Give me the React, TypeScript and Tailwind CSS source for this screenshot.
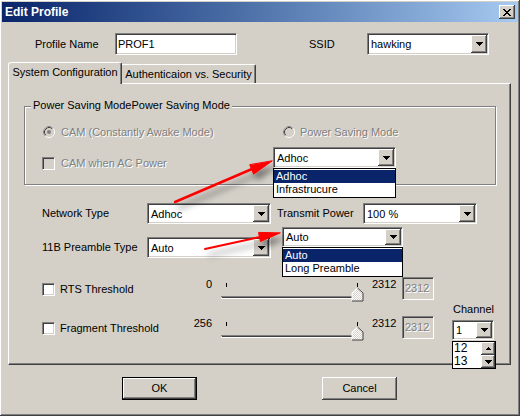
import React from 'react'

// classic 3D edges
const RAISED =
  'shadow-[inset_-1px_-1px_0_#404040,inset_1px_1px_0_#ffffff,inset_-2px_-2px_0_#808080,inset_2px_2px_0_#d4d0c8]'
const SUNKEN =
  'border border-t-[#808080] border-l-[#808080] border-r-white border-b-white shadow-[inset_1px_1px_0_#404040,inset_-1px_-1px_0_#d4d0c8]'
const DISABLED = 'text-[#808080] [text-shadow:1px_1px_0_#ffffff]'

function DownGlyph() {
  return (
    <svg width="7" height="4" viewBox="0 0 7 4" shapeRendering="crispEdges">
      <path d="M0 0h7v1H0zM1 1h5v1H1zM2 2h3v1H2zM3 3h1v1H3z" fill="#000" />
    </svg>
  )
}

function UpGlyph() {
  return (
    <svg width="5" height="3" viewBox="0 0 5 3" shapeRendering="crispEdges">
      <path d="M2 0h1v1H2zM1 1h3v1H1zM0 2h5v1H0z" fill="#000" />
    </svg>
  )
}

function DropButton() {
  return (
    <div className={`flex w-[16px] shrink-0 items-center justify-center bg-[#d4d0c8] ${RAISED}`}>
      <DownGlyph />
    </div>
  )
}

function Combo({ value, className }: { value: string; className: string }) {
  return (
    <div className={`flex bg-white p-[1px] ${SUNKEN} ${className}`}>
      <span className="flex-1 self-center truncate pl-[2px] leading-[14px]">{value}</span>
      <DropButton />
    </div>
  )
}

function ListBox({ items, className }: { items: string[]; className: string }) {
  return (
    <div className={`border border-black bg-white ${className}`}>
      {items.map((item, i) => (
        <div
          key={item}
          className={`h-[13px] pl-[2px] leading-[13px] ${i === 0 ? 'bg-[#0a246a] text-white' : ''}`}
        >
          {item}
        </div>
      ))}
    </div>
  )
}

function CheckBox({ disabled }: { disabled?: boolean }) {
  return (
    <div
      className={`h-[13px] w-[13px] shrink-0 ${SUNKEN} ${disabled ? 'bg-[#d4d0c8]' : 'bg-white'}`}
    />
  )
}

function Radio({ checked }: { checked?: boolean }) {
  return (
    <svg width="12" height="12" viewBox="0 0 12 12" className="shrink-0">
      <circle cx="6" cy="6" r="5.5" fill="#d4d0c8" stroke="#ffffff" />
      <path d="M2.11 9.89A5.5 5.5 0 0 1 9.89 2.11" fill="none" stroke="#808080" />
      <circle cx="6" cy="6" r="4.5" fill="none" stroke="#d4d0c8" />
      <path d="M2.82 9.18A4.5 4.5 0 0 1 9.18 2.82" fill="none" stroke="#404040" />
      {checked && <circle cx="6" cy="6" r="2" fill="#808080" />}
    </svg>
  )
}

function Slider() {
  return (
    <svg width="148" height="25" viewBox="0 0 148 25" shapeRendering="crispEdges" className="shrink-0">
      <defs>
        <pattern id="dither" width="2" height="2" patternUnits="userSpaceOnUse">
          <rect width="2" height="2" fill="#d4d0c8" />
          <rect width="1" height="1" fill="#ffffff" />
          <rect x="1" y="1" width="1" height="1" fill="#ffffff" />
        </pattern>
      </defs>
      <rect x="8" y="6" width="1" height="4" fill="#000" />
      <rect x="139" y="6" width="1" height="4" fill="#000" />
      <rect x="3" y="19" width="139" height="1" fill="#808080" />
      <rect x="4" y="20" width="137" height="1" fill="#404040" />
      <rect x="3" y="21" width="140" height="1" fill="#ffffff" />
      <polygon points="134,16 139.5,11 145,16 145,24 134,24" fill="url(#dither)" />
      <polyline points="134,24 134,16 139.5,11" fill="none" stroke="#ffffff" shapeRendering="auto" />
      <polyline points="139.5,11 145,16 145,24 134,24" fill="none" stroke="#404040" shapeRendering="auto" />
    </svg>
  )
}

function ThresholdRow({ label, min }: { label: string; min: string }) {
  return (
    <div className="flex h-[23px] items-start">
      <div className="ml-[33px] mt-[6px] flex w-[139px] items-center gap-[5px]">
        <CheckBox />
        <span className="leading-[13px]">{label}</span>
      </div>
      <span className="mt-[1px] w-[31px] text-right leading-[13px]">{min}</span>
      <div className="ml-[6px]">
        <Slider />
      </div>
      <span className="ml-[6px] mt-[1px] w-[30px] leading-[13px]">2312</span>
      <div className={`flex h-[23px] w-[32px] items-center bg-[#d4d0c8] pl-[2px] ${SUNKEN} ${DISABLED}`}>
        2312
      </div>
    </div>
  )
}

function PushButton({ label, isDefault }: { label: string; isDefault?: boolean }) {
  return (
    <div className={`h-[23px] w-[75px] ${isDefault ? 'border border-black' : ''}`}>
      <div className={`flex h-full w-full items-center justify-center bg-[#d4d0c8] ${RAISED}`}>{label}</div>
    </div>
  )
}

export default function App() {
  return (
    <div
      className={`relative flex h-[416px] w-[520px] flex-col bg-[#d4d0c8] font-['Liberation_Sans',Arial,sans-serif] text-[11px] text-black ${RAISED}`}
    >
      {/* title bar */}
      <div className="mx-[2px] mt-[2px] flex h-[20px] items-center justify-between bg-linear-to-r from-[#0a246a] to-[#a6caf0] pl-[3px] pr-[3px]">
        <span className="text-[12px] font-bold text-white">Edit Profile</span>
        <div className={`flex h-[14px] w-[16px] items-center justify-center bg-[#d4d0c8] ${RAISED}`}>
          <svg width="8" height="7" viewBox="0 0 8 7" shapeRendering="crispEdges">
            <path
              d="M0 0h2v1H0zM6 0h2v1H6zM1 1h2v1H1zM5 1h2v1H5zM2 2h4v1H2zM3 3h2v1H3zM2 4h4v1H2zM1 5h2v1H1zM5 5h2v1H5zM0 6h2v1H0zM6 6h2v1H6z"
              fill="#000"
            />
          </svg>
        </div>
      </div>

      {/* profile name / ssid */}
      <div className="mt-[11px] flex h-[22px] items-center">
        <span className="ml-[35px] w-[80px]">Profile Name</span>
        <div className={`flex h-[22px] w-[122px] items-center bg-white pl-[2px] ${SUNKEN}`}>PROF1</div>
        <span className="ml-[72px] w-[58px]">SSID</span>
        <Combo value="hawking" className="h-[22px] w-[122px]" />
      </div>

      {/* tabs */}
      <div className="ml-[8px] mt-[7px] w-[503px]">
        <div className="flex h-[21px] items-end">
          <div className="relative z-10 -mb-px flex h-[22px] w-[114px] items-center justify-center rounded-tl-[3px] rounded-tr-[2px] border-l border-t border-r border-white border-r-[#404040] bg-[#d4d0c8] pb-[2px] shadow-[inset_-1px_0_0_#808080]">
            System Configuration
          </div>
          <div className="flex h-[19px] w-[134px] items-center justify-center rounded-tr-[2px] border-t border-r border-white border-r-[#404040] shadow-[inset_-1px_0_0_#808080]">
            Authenticaion vs. Security
          </div>
        </div>

        <div className="flex h-[282px] flex-col border border-white border-r-[#404040] border-b-[#404040] shadow-[inset_-1px_-1px_0_#808080]">
          {/* power saving group */}
          <div className="relative ml-[15px] mt-[22px] h-[79px] w-[472px] border border-[#808080] shadow-[1px_1px_0_#ffffff,inset_1px_1px_0_#ffffff]">
            <span className="absolute -top-[8px] left-[6px] bg-[#d4d0c8] px-[2px] leading-[13px]">
              Power Saving ModePower Saving Mode
            </span>
            <div className="mt-[19px] flex h-[12px] items-center">
              <div className="ml-[18px] flex w-[240px] items-center gap-[6px]">
                <Radio checked />
                <span className={DISABLED}>CAM (Constantly Awake Mode)</span>
              </div>
              <div className="flex items-center gap-[5px]">
                <Radio />
                <span className={DISABLED}>Power Saving Mode</span>
              </div>
            </div>
            <div className="ml-[17px] mt-[19px] flex h-[13px] items-center gap-[6px]">
              <CheckBox disabled />
              <span className={DISABLED}>CAM when AC Power</span>
            </div>
          </div>

          {/* network type / transmit power */}
          <div className="mt-[18px] flex h-[21px] items-center">
            <span className="ml-[33px] w-[105px]">Network Type</span>
            <Combo value="Adhoc" className="h-[21px] w-[124px]" />
            <span className="ml-[6px] w-[86px]">Transmit Power</span>
            <Combo value="100 %" className="h-[21px] w-[114px]" />
          </div>

          {/* preamble */}
          <div className="mt-[13px] flex h-[21px] items-center">
            <span className="ml-[33px] w-[105px]">11B Preamble Type</span>
            <Combo value="Auto" className="h-[21px] w-[124px]" />
          </div>

          {/* thresholds + channel */}
          <div className="mt-[19px] flex">
            <div className="flex w-[425px] flex-col gap-[16px]">
              <ThresholdRow label="RTS Threshold" min="0" />
              <ThresholdRow label="Fragment Threshold" min="256" />
            </div>
            <div className="relative ml-[18px] mt-[26px] flex flex-col">
              <span className="pl-[1px] leading-[13px]">Channel</span>
              <Combo value="1" className="mt-[4px] h-[20px] w-[42px]" />
              <div className="absolute left-0 top-full z-20 mt-[1px] flex h-[28px] w-[44px] border border-black bg-white">
                <div className="flex flex-1 flex-col pl-[1px] text-[12px] leading-[13px]">
                  <span>12</span>
                  <span>13</span>
                </div>
                <div className="flex w-[14px] flex-col">
                  <div className={`flex h-[13px] items-center justify-center bg-[#d4d0c8] ${RAISED}`}>
                    <UpGlyph />
                  </div>
                  <div className={`flex h-[13px] items-center justify-center bg-[#d4d0c8] ${RAISED}`}>
                    <DownGlyph />
                  </div>
                </div>
              </div>
            </div>
          </div>
        </div>
      </div>

      {/* dialog buttons */}
      <div className="mt-[12px] flex">
        <div className="ml-[122px]">
          <PushButton label="OK" isDefault />
        </div>
        <div className="ml-[125px]">
          <PushButton label="Cancel" />
        </div>
      </div>

      {/* opened drop-down lists */}
      <div className="absolute left-[273px] top-[147px] z-20 w-[123px]">
        <Combo value="Adhoc" className="h-[21px] w-[123px]" />
        <ListBox items={['Adhoc', 'Infrastrucure']} className="w-[123px] py-px" />
      </div>
      <div className="absolute left-[282px] top-[227px] z-20 w-[121px]">
        <Combo value="Auto" className="h-[20px] w-[121px]" />
        <ListBox items={['Auto', 'Long Preamble']} className="w-[121px] py-px" />
      </div>

      {/* red callout arrows */}
      <svg className="pointer-events-none absolute left-0 top-0 z-30" width="520" height="416">
        <defs>
          <filter id="shade" x="-30%" y="-60%" width="160%" height="240%">
            <feDropShadow dx="4" dy="6" stdDeviation="3" floodColor="#000" floodOpacity="0.45" />
          </filter>
        </defs>
        <g filter="url(#shade)" fill="#ff0000" stroke="#ff0000" strokeLinecap="round">
          <line x1="175" y1="202" x2="252" y2="169" strokeWidth="2.5" />
          <polygon points="272,161 253.6,174.2 249.8,165" strokeWidth="1" />
          <line x1="205" y1="249" x2="260" y2="237" strokeWidth="2" />
          <polygon points="280,233 260.4,241.6 258.6,232.8" strokeWidth="1" />
        </g>
      </svg>
    </div>
  )
}
